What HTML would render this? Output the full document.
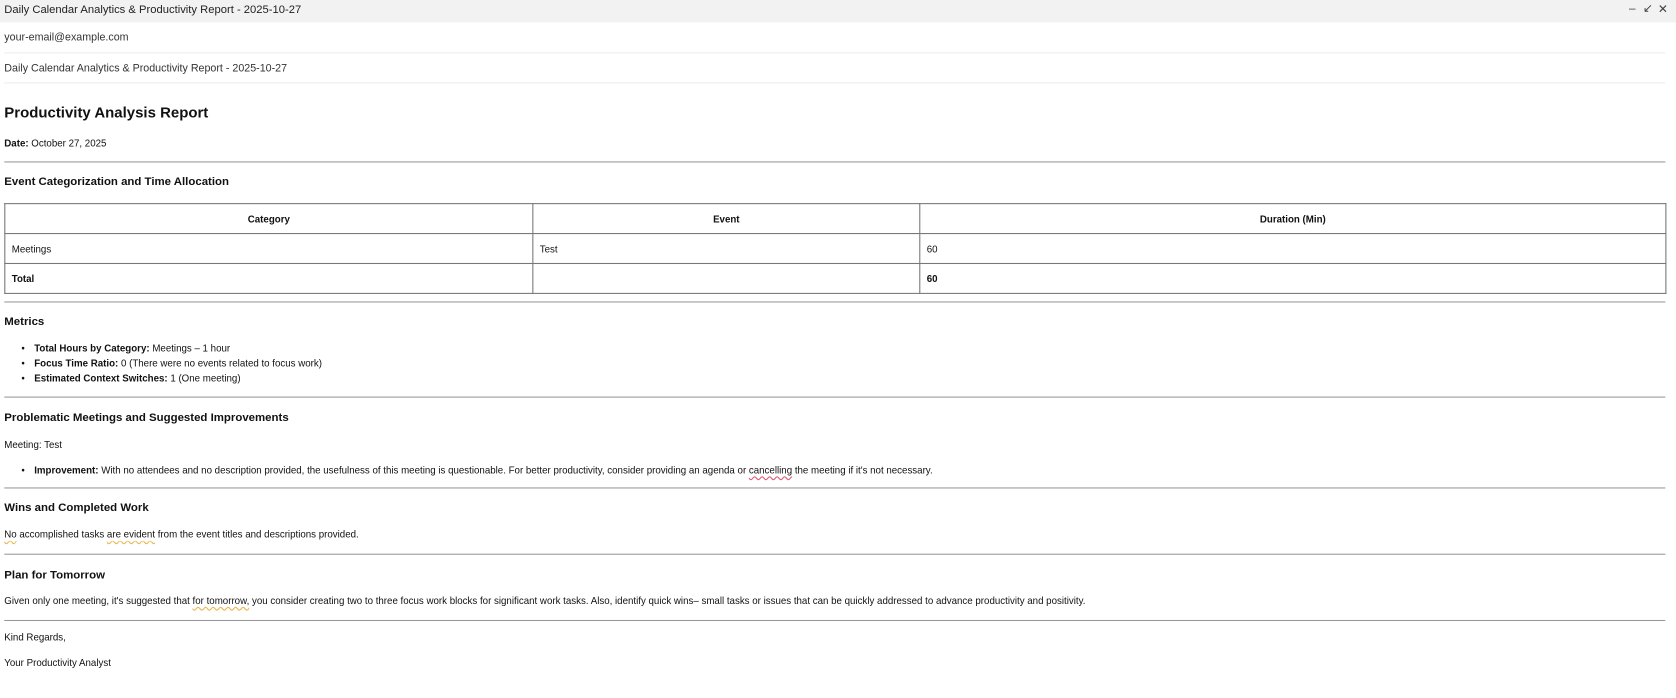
<!DOCTYPE html>
<html><head><meta charset="utf-8"><style>
body{margin:0;width:1676px;height:698px;background:#fff;font-family:"Liberation Sans",Arial,sans-serif;color:#111;position:relative;overflow:hidden}
#w{position:absolute;left:0;top:0;width:1568px;height:653px;transform:scale(1.0689);transform-origin:0 0}
.a{position:absolute;white-space:nowrap}
.bar{position:absolute;left:0;top:0;width:1568px;height:21px;background:#f2f2f2}
.hr{position:absolute;left:4px;width:1554px;height:0;border-top:1px solid #999}
.ln{position:absolute;left:4px;width:1554px;border-top:1px solid #eee}
.t{font-size:9.1px}
.h{font-size:10.7px;font-weight:bold}
ul{margin:0;padding:0}
li{font-size:9.1px;position:absolute;left:32px;white-space:nowrap;list-style:none}
li:before{content:"•";position:absolute;left:-12px}
table{position:absolute;left:4px;top:190px;width:1555px;border-collapse:collapse;font-size:9.1px}
td,th{border:1px solid #777;height:27px;padding:0 6px}
th{text-align:center}
.sq{text-decoration:underline wavy #e8b84a;text-underline-offset:2px}
.sr{text-decoration:underline wavy #e05a78;text-underline-offset:2px}
</style></head><body><div id="w">
<div class="bar"></div>
<div class="a" style="left:4px;top:3px;font-size:10.5px;color:#222">Daily Calendar Analytics &amp; Productivity Report - 2025-10-27</div>
<div class="a" style="left:1524px;top:2px;font-size:11px;color:#444">&#8211;</div>
<div class="a" style="left:1537px;top:1px;font-size:11px;color:#444">&#8601;</div>
<div class="a" style="left:1551px;top:2px;font-size:11px;color:#444">&#10005;</div>
<div class="a" style="left:4px;top:30px;font-size:10px;color:#333">your-email@example.com</div>
<div class="ln" style="top:49px"></div>
<div class="a" style="left:4px;top:59px;font-size:10px;color:#333">Daily Calendar Analytics &amp; Productivity Report - 2025-10-27</div>
<div class="ln" style="top:77px"></div>
<div class="a" style="left:4px;top:97px;font-size:14px;font-weight:bold">Productivity Analysis Report</div>
<div class="a t" style="left:4px;top:129px"><b>Date:</b> October 27, 2025</div>
<div class="hr" style="top:151px"></div>
<div class="a h" style="left:4px;top:164px">Event Categorization and Time Allocation</div>
<table>
<tr><th style="width:481px">Category</th><th style="width:349px">Event</th><th>Duration (Min)</th></tr>
<tr><td>Meetings</td><td>Test</td><td>60</td></tr>
<tr><td><b>Total</b></td><td></td><td><b>60</b></td></tr>
</table>
<div class="hr" style="top:282px"></div>
<div class="a h" style="left:4px;top:295px">Metrics</div>
<ul>
<li style="top:321px"><b>Total Hours by Category:</b> Meetings – 1 hour</li>
<li style="top:335px"><b>Focus Time Ratio:</b> 0 (There were no events related to focus work)</li>
<li style="top:349px"><b>Estimated Context Switches:</b> 1 (One meeting)</li>
</ul>
<div class="hr" style="top:371px"></div>
<div class="a h" style="left:4px;top:385px">Problematic Meetings and Suggested Improvements</div>
<div class="a t" style="left:4px;top:411px">Meeting: Test</div>
<ul><li style="top:435px"><b>Improvement:</b> With no attendees and no description provided, the usefulness of this meeting is questionable. For better productivity, consider providing an agenda or <span class="sr">cancelling</span> the meeting if it's not necessary.</li></ul>
<div class="hr" style="top:456px"></div>
<div class="a h" style="left:4px;top:469px">Wins and Completed Work</div>
<div class="a t" style="left:4px;top:495px"><span class="sq">No</span> accomplished tasks <span class="sq">are evident</span> from the event titles and descriptions provided.</div>
<div class="hr" style="top:518px"></div>
<div class="a h" style="left:4px;top:532px">Plan for Tomorrow</div>
<div class="a t" style="left:4px;top:557px">Given only one meeting, it's suggested that <span class="sq">for tomorrow,</span> you consider creating two to three focus work blocks for significant work tasks. Also, identify quick wins– small tasks or issues that can be quickly addressed to advance productivity and positivity.</div>
<div class="hr" style="top:580px"></div>
<div class="a t" style="left:4px;top:591px">Kind Regards,</div>
<div class="a t" style="left:4px;top:615px">Your Productivity Analyst</div>
</div></body></html>
